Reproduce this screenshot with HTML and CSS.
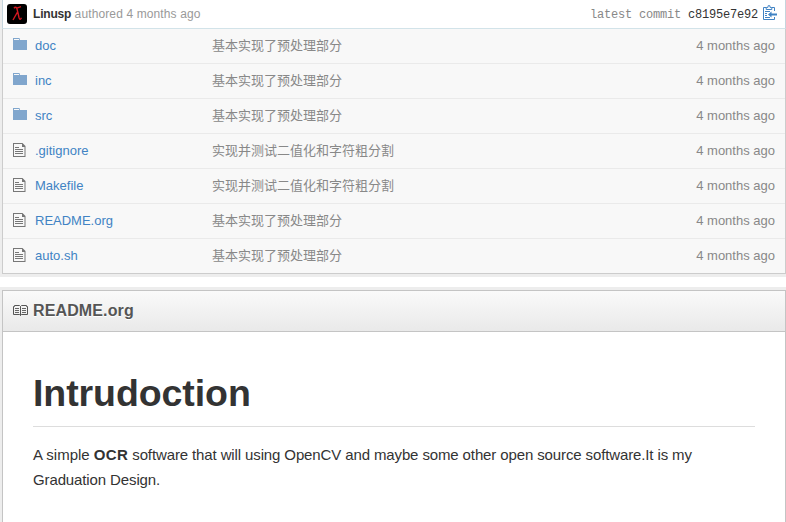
FILE: index.html
```
<!DOCTYPE html>
<html lang="en">
<head>
<meta charset="utf-8">
<title>Repository files</title>
<link rel="stylesheet" href="styles.css">
</head>
<body>
<svg class="defs" width="0" height="0">
  <symbol id="folder" viewBox="0 0 14 12">
    <path fill="#80a6cd" fill-rule="evenodd" d="M0 0h6.5l.5 2H14v10H0zM1 1v1h5V1z"/>
  </symbol>
  <symbol id="file" viewBox="0 0 13 14">
    <path fill="#777" fill-rule="evenodd" d="M0 0h9.5L12.5 3v11H0zM1 1v12h10.5V4H9V1zM2 4h4v1H2zM2 6h8v1H2zM2 8h8v1H2zM2 10h8v1H2z"/>
  </symbol>
</svg>
<section class="bubble files">
  <div class="commit">
    <svg class="avatar" viewBox="0 0 20 20"><rect width="20" height="20" rx="3"/><path d="M7 4.2Q8.5 2.3 9.8 4.2Q10.6 7 12 13.5Q13 17 14.4 13.8M10.5 8L6 16M9.8 4.2L14 2.7" fill="none" stroke="#d51820" stroke-width="1.4"/></svg>
    <span class="author"><b>Linusp</b> authored 4 months ago</span>
    <span class="latest">latest commit <a>c8195e7e92</a></span>
    <svg class="clip" viewBox="0 0 14 15"><path fill="none" stroke="#4183c4" d="M3 2.5H.5v12h11V12M9 2.5h2.5V6M3.2 4.5v-2h1.6L5.2.7h1.6l.4 1.8h1.6v2z"/><path stroke="#4183c4" d="M2 6.5h5M2 8.5h2M2 10.5h2M2 12.5h5"/><path fill="#4183c4" d="M5 9.5L8.5 6.5v2H14v2H8.5v2z"/></svg>
  </div>
  <div class="list">
    <div class="row"><svg class="folder"><use href="#folder"/></svg><a>doc</a><span class="message">基本实现了预处理部分</span><span class="age">4 months ago</span></div>
    <div class="row"><svg class="folder"><use href="#folder"/></svg><a>inc</a><span class="message">基本实现了预处理部分</span><span class="age">4 months ago</span></div>
    <div class="row"><svg class="folder"><use href="#folder"/></svg><a>src</a><span class="message">基本实现了预处理部分</span><span class="age">4 months ago</span></div>
    <div class="row"><svg class="file"><use href="#file"/></svg><a>.gitignore</a><span class="message">实现并测试二值化和字符粗分割</span><span class="age">4 months ago</span></div>
    <div class="row"><svg class="file"><use href="#file"/></svg><a>Makefile</a><span class="message">实现并测试二值化和字符粗分割</span><span class="age">4 months ago</span></div>
    <div class="row"><svg class="file"><use href="#file"/></svg><a>README.org</a><span class="message">基本实现了预处理部分</span><span class="age">4 months ago</span></div>
    <div class="row"><svg class="file"><use href="#file"/></svg><a>auto.sh</a><span class="message">基本实现了预处理部分</span><span class="age">4 months ago</span></div>
  </div>
</section>
<section class="bubble readme">
  <div class="title">
    <svg class="book" viewBox="0 0 15 12"><path fill="none" stroke="#555" d="M.5 1.5H1.5V.5H6.5l1 1 1-1h5v1h1v8h-6l-1 1-1-1h-6zM7.5 1.5v9"/><path stroke="#666" d="M2 3.5h4M2 5.5h4M2 7.5h4M9 3.5h4M9 5.5h4M9 7.5h4"/></svg>
    <span>README.org</span>
  </div>
  <article>
    <h1>Intrudoction</h1>
    <p>A simple <b>OCR</b> <span class="rest">software that will using OpenCV and maybe some other open source software.It is my Graduation Design.</span></p>
  </article>
</section>
</body>
</html>
```
FILE: styles.css
```
* { box-sizing: border-box; }
body {
  margin: 0;
  height: 522px;
  overflow: hidden;
  background: #fff;
  color: #333;
  font: 13px/20px "Liberation Sans", "Noto Sans CJK SC", sans-serif;
}
.defs { display: block; }
.bubble { background: #ededed; padding-left: 2px; }
.files { height: 277px; padding-bottom: 3px; }
.commit {
  height: 29px;
  display: flex;
  align-items: flex-start;
  padding: 4px 8px 0 4px;
  background: #fff;
  border: solid #c5d5dd;
  border-width: 0 1px 1px;
  border-bottom-color: #d2e3e9;
}
.avatar { width: 20px; height: 20px; margin-right: 6px; }
.author { font-size: 12px; letter-spacing: 0.12px; color: #999; }
.author b { color: #333; letter-spacing: -0.2px; }
.latest {
  margin-left: auto;
  font: 12px/22px "Liberation Mono", monospace;
  letter-spacing: -0.2px;
  color: #888;
}
.latest a { color: #333; }
.clip { width: 14px; height: 15px; margin: 1px 0 0 5px; }
.list {
  background: #f8f8f8;
  border: 1px solid #ccc;
  border-top: 0;
}
.row {
  height: 35px;
  display: grid;
  grid-template-columns: 22px 177px 1fr auto;
  padding: 7px 10px 0 10px;
  border-bottom: 1px solid #eaeaea;
  color: #888;
}
.row:last-child { height: 34px; border-bottom: 0; }
.row a { color: #4183c4; }
.folder { width: 14px; height: 12px; margin-top: 2px; }
.file { width: 13px; height: 14px; margin-top: 2px; }
.readme { height: 235px; margin-top: 10px; padding-top: 3px; }
.title {
  height: 42px;
  display: flex;
  align-items: center;
  padding: 0 10px;
  gap: 5px;
  border: 1px solid #c4c4c4;
  background: linear-gradient(#fafafa, #e9e9e9);
  color: #555;
  font-size: 16px;
  font-weight: bold;
  letter-spacing: 0.13px;
  text-shadow: 0 1px 0 #fff;
}
.book { width: 15px; height: 12px; }
article {
  height: 190px;
  padding: 30px;
  background: #fff;
  border: solid #c4c4c4;
  border-width: 0 1px;
  font-size: 15px;
  line-height: 25px;
}
h1 {
  height: 65px;
  margin: 0 0 15px;
  border-bottom: 1px solid #ddd;
  font-size: 37.5px;
  letter-spacing: -0.08px;
  line-height: 63px;
}
p { margin: 0; }
p b { letter-spacing: 0.3px; }
.rest { letter-spacing: -0.12px; }
```
